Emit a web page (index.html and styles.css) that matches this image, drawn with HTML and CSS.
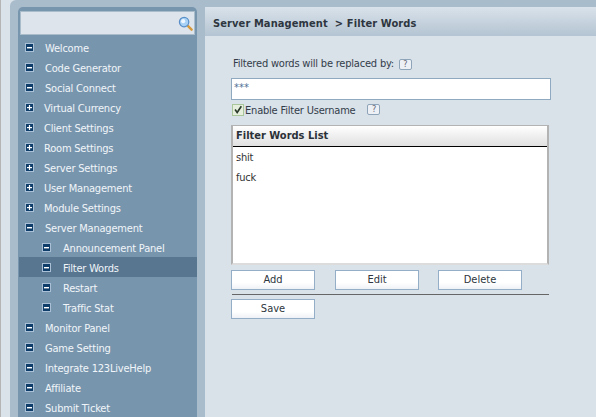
FILE: index.html
```html
<!DOCTYPE html>
<html lang="en">
<head>
    <meta charset="UTF-8">
    <title>Filter Words</title>
    <link rel="stylesheet" href="styles.css">
</head>
<body>
    <svg class="defs" width="0" height="0">
        <symbol id="minus" viewBox="0 0 9 9"><rect x="0.5" y="0.5" width="8" height="8" fill="#0f3d6a" stroke="#a9c0d6"/><rect x="2" y="4" width="5" height="1.4" fill="#fff"/></symbol>
        <symbol id="plus" viewBox="0 0 9 9"><rect x="0.5" y="0.5" width="8" height="8" fill="#0f3d6a" stroke="#a9c0d6"/><rect x="2" y="4" width="5" height="1.2" fill="#fff"/><rect x="3.9" y="2" width="1.2" height="5" fill="#fff"/></symbol>
    </svg>
    <div class="page">
        <div class="side">
            <div class="side-panel">
                <div class="nav">
                    <div class="search">
                        <svg class="glass" width="15" height="15" viewBox="0 0 16 16">
                            <path d="M10.5 10.5l4 4" stroke="#d69a3c" stroke-width="2.6" stroke-linecap="round"/>
                            <circle cx="6.5" cy="6.5" r="5" fill="#a8d2f5" stroke="#5a8fc8" stroke-width="1.3"/>
                            <circle cx="5.5" cy="5.5" r="2.2" fill="#eef7ff"/>
                        </svg>
                    </div>
                    <ul class="menu">
                        <li class="item"><svg class="ico"><use href="#minus"/></svg>Welcome</li>
                        <li class="item"><svg class="ico"><use href="#minus"/></svg>Code Generator</li>
                        <li class="item"><svg class="ico"><use href="#minus"/></svg>Social Connect</li>
                        <li class="item closed"><svg class="ico"><use href="#plus"/></svg>Virtual Currency</li>
                        <li class="item closed"><svg class="ico"><use href="#plus"/></svg>Client Settings</li>
                        <li class="item closed"><svg class="ico"><use href="#plus"/></svg>Room Settings</li>
                        <li class="item closed"><svg class="ico"><use href="#plus"/></svg>Server Settings</li>
                        <li class="item closed"><svg class="ico"><use href="#plus"/></svg>User Management</li>
                        <li class="item closed"><svg class="ico"><use href="#plus"/></svg>Module Settings</li>
                        <li class="item"><svg class="ico"><use href="#minus"/></svg>Server Management</li>
                        <li class="item sub"><svg class="ico"><use href="#minus"/></svg>Announcement Panel</li>
                        <li class="item sub active"><svg class="ico"><use href="#minus"/></svg>Filter Words</li>
                        <li class="item sub"><svg class="ico"><use href="#minus"/></svg>Restart</li>
                        <li class="item sub"><svg class="ico"><use href="#minus"/></svg>Traffic Stat</li>
                        <li class="item"><svg class="ico"><use href="#minus"/></svg>Monitor Panel</li>
                        <li class="item"><svg class="ico"><use href="#minus"/></svg>Game Setting</li>
                        <li class="item"><svg class="ico"><use href="#minus"/></svg>Integrate 123LiveHelp</li>
                        <li class="item"><svg class="ico"><use href="#minus"/></svg>Affiliate</li>
                        <li class="item"><svg class="ico"><use href="#minus"/></svg>Submit Ticket</li>
                    </ul>
                </div>
            </div>
        </div>
        <div class="main">
            <div class="title">Server Management &nbsp;&gt; Filter Words</div>
            <div class="content">
                <div class="label">Filtered words will be replaced by: <span class="help">?</span></div>
                <input class="field" type="text" value="***">
                <div class="check-row">
                    <span class="check">
                        <svg width="12" height="12" viewBox="0 0 12 12"><path d="M2.5 5.5l2.5 3.5L10 1.5" fill="none" stroke="#2b3a2b" stroke-width="2"/></svg>
                    </span>
                    <span>Enable Filter Username</span>
                    <span class="help spaced">?</span>
                </div>
                <div class="list">
                    <div class="list-head">Filter Words List</div>
                    <div class="list-row">shit</div>
                    <div class="list-row">fuck</div>
                </div>
                <div class="buttons">
                    <button class="btn">Add</button>
                    <button class="btn">Edit</button>
                    <button class="btn last">Delete</button>
                </div>
                <div class="rule"></div>
                <button class="btn">Save</button>
            </div>
        </div>
    </div>
</body>
</html>
```

FILE: styles.css
```css
html, body { margin: 0; height: 100%; overflow: hidden; }
body { font-family: "DejaVu Sans Condensed", "DejaVu Sans", sans-serif; font-stretch: condensed; font-size: 11px; letter-spacing: -0.2px; color: #333d4a; }
.defs { display: block; height: 0; }

.page { display: flex; height: 417px; background: #a9bccc; }

.side { width: 197px; height: 417px; box-sizing: border-box; padding-left: 9px; border-left: 1px solid #b5b5b5; background: #dbe3ea; }
.side-panel { height: 417px; box-sizing: border-box; padding: 7px 0 0 8px; background: #a9bccc; border-radius: 6px 0 0 0; }
.nav { width: 179px; height: 410px; box-sizing: border-box; background: #7895ae; border-radius: 5px 5px 0 0; padding: 4px 0 0 1px; }
.search { height: 24px; margin: 0 2px 2px 1px; box-sizing: border-box; background: #dde4eb; border: 1px solid #a9bccc; display: flex; align-items: center; justify-content: flex-end; padding-right: 1px; }

.menu { list-style: none; margin: 0; padding: 0; }
.item { height: 20px; box-sizing: border-box; display: flex; align-items: center; padding: 2px 0 0 6px; color: #f1f5f9; }
.ico { width: 9px; height: 9px; margin: 0 11px 1px 0; flex: none; }
.closed .ico { margin-right: 10px; }
.sub { padding-left: 23px; }
.sub .ico { margin-right: 12px; }
.active { background: #587690; }

.main { width: 391px; margin: 7px 0 0 8px; background: #d9e1e9; border-radius: 5px 0 0 0; }
.title { height: 29px; box-sizing: border-box; padding: 0 8px; line-height: 33px; font-weight: bold; letter-spacing: 0.1px; color: #2e3640; background: linear-gradient(to bottom, #d9e2ea, #b4c4d2); }

.content { padding: 20px 0 0 26px; }
.label { height: 22px; padding-left: 2px; line-height: 15px; }
.help { display: inline-block; width: 11px; height: 9px; line-height: 9px; margin-left: 2px; text-align: center; font-size: 9px; background: #edf1f5; border: 1px solid #8ea4b8; border-radius: 2px; color: #667; }
.help.spaced { margin-left: 11px; }
.field { display: block; width: 320px; height: 22px; box-sizing: border-box; margin: 0; padding: 0 2px 3px; border: 1px solid #8ea9c0; background: #fff; font: inherit; letter-spacing: 0; color: #4d7296; }
.check-row { height: 25px; box-sizing: border-box; display: flex; align-items: flex-start; gap: 1px; padding: 4px 0 0 1px; line-height: 13px; }
.check { width: 12px; height: 12px; box-sizing: border-box; background: #e6efdd; border: 1px solid #a9c79a; display: flex; align-items: center; justify-content: center; }

.list { width: 318px; height: 140px; box-sizing: border-box; background: #fff; border: 2px solid #b3b3b3; border-bottom-color: #dcdcdc; border-top-width: 1px; }
.list-head { height: 21px; box-sizing: border-box; line-height: 19px; padding-left: 3px; font-weight: bold; letter-spacing: 0; color: #2b3138; border-bottom: 1px solid #000; background: linear-gradient(to bottom, #fff, #e0e0e0); margin-bottom: 1px; }
.list-row { height: 20px; line-height: 20px; padding-left: 3px; color: #333; }

.buttons { display: flex; gap: 20px; margin-top: 5px; }
.btn { width: 84px; height: 20px; box-sizing: border-box; padding: 0 0 2px; border: 1px solid #93aec6; border-radius: 0; font: inherit; letter-spacing: 0; color: #2e3640; background: linear-gradient(to bottom, #fff 65%, #eef1f5); }
.btn.last { margin-left: -1px; }
.rule { width: 317px; height: 1px; background: #666; margin: 4px 0 4px 1px; }
```
